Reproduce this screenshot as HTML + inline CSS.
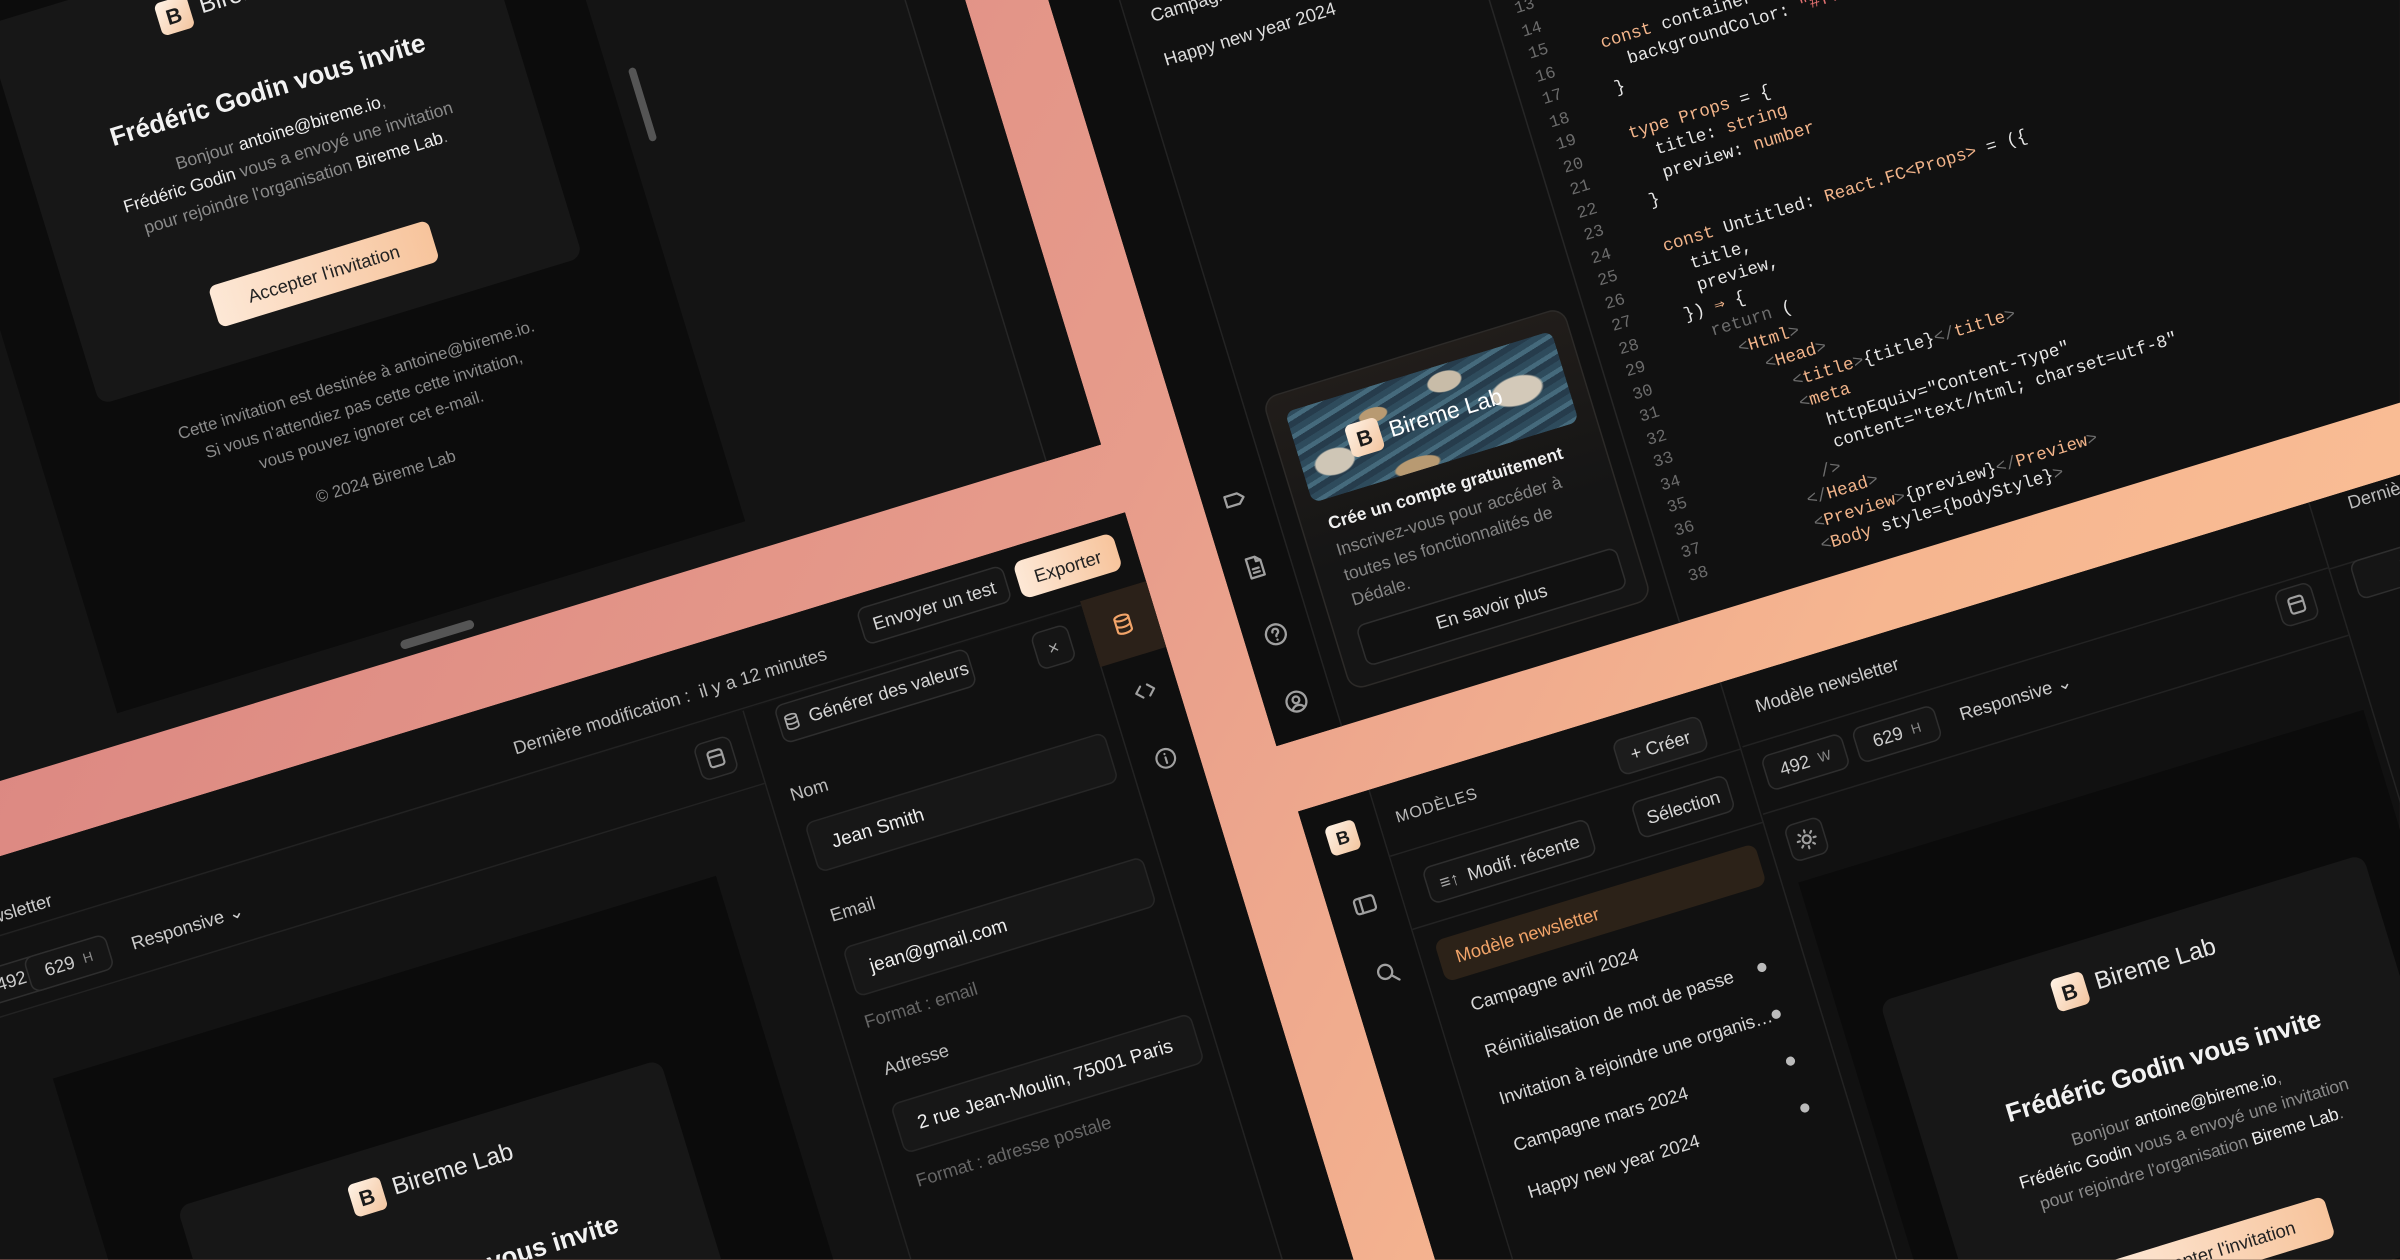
<!DOCTYPE html>
<html><head><meta charset="utf-8">
<style>
*{box-sizing:border-box;margin:0;padding:0}
html,body{width:2400px;height:1260px;overflow:hidden}
#clip{position:relative;width:2400px;height:1260px;overflow:hidden;background:linear-gradient(118deg,#d8817f 0%,#e79c8b 45%,#f6b690 72%,#fcc298 100%);font-family:"Liberation Sans",sans-serif}
#w{position:absolute;left:0;top:0;width:1568px;height:823px;transform:scale(1.5306);transform-origin:0 0;overflow:hidden}
#s{position:absolute;left:0;top:0;width:0;height:0;transform:rotate(-17deg);transform-origin:0 0}
.a{position:absolute;white-space:nowrap}
.p{position:absolute;background:#111}
.t{position:absolute;white-space:nowrap;color:#d8d8d8;font-size:12px;line-height:16px}
.btn{position:absolute;border:1px solid #2e2e2e;background:#151515;border-radius:6px;color:#d6d6d6;font-size:12px;display:flex;align-items:center;justify-content:center;gap:6px;white-space:nowrap}
.grad{background:linear-gradient(90deg,#fde8d6,#f7c49c);color:#222;border:none}
.logo{display:inline-flex;align-items:center;justify-content:center;width:22px;height:22px;border-radius:4px;background:linear-gradient(135deg,#fff3e6,#f3c49e);color:#1a1a1a;font-weight:700;font-size:14px}
.email{position:absolute;width:330px}
.email .card{position:absolute;left:0;top:0;width:330px;height:259px;background:#171717;border-radius:8px}
.email .c{position:absolute;left:0;width:330px;text-align:center;white-space:nowrap}
.email .body{color:#8a8a8a;font-size:11.5px;line-height:17px}
.email .body b{color:#eee;font-weight:400}
.inp{position:absolute;background:#171717;border:1px solid #262626;border-radius:6px;color:#eee;font-size:12.5px;display:flex;align-items:center;padding-left:13px;white-space:nowrap}
.lab{position:absolute;color:#bdbdbd;font-size:12px;line-height:14px;white-space:nowrap}
.hint{position:absolute;color:#666;font-size:12px;line-height:14px;white-space:nowrap}
.code{position:absolute;font-family:"Liberation Mono",monospace;font-size:11.5px;line-height:15.5px;white-space:pre;color:#e6e6e6}
.num{position:absolute;font-family:"Liberation Mono",monospace;font-size:11px;line-height:15.5px;color:#6c6c6c;text-align:right;width:28px;white-space:pre}
.k{color:#f2b48a}.g{color:#6d6d6d}.r{color:#e07070}
svg.i{position:absolute;fill:none;stroke:#a0a0a0;stroke-width:1.5;stroke-linecap:round;stroke-linejoin:round}
</style></head><body>
<div id="clip">
<div id="w"><div id="s">

<!-- TOP LEFT PANEL -->
<div class="p" style="left:-500px;top:-400px;width:1103px;height:888px;background:#141414"></div>
<div class="p" style="left:-63px;top:-400px;width:429px;height:868px;background:#0c0c0c"></div>
<div class="p" style="left:565px;top:-400px;width:38px;height:888px;background:#111;border-left:1px solid #262626"></div>
<div class="a" style="left:379px;top:163px;width:5px;height:50px;border-radius:3px;background:#555"></div>
<div class="a" style="left:127px;top:477px;width:50px;height:6px;border-radius:3px;background:#555"></div>
<div class="email" style="left:-15px;top:13px">
 <div class="card"></div>
 <div class="c" style="top:18px;height:24px;display:flex;justify-content:center;align-items:center;gap:7px"><span class="logo">B</span><span style="color:#e6e6e6;font-size:16px">Bireme Lab</span></div>
 <div class="c" style="top:83px;line-height:24px;font-size:17px;font-weight:700;color:#f2f2f2">Frédéric Godin vous invite</div>
 <div class="c body" style="top:116px">Bonjour <b>antoine@bireme.io</b>,<br><b>Frédéric Godin</b> vous a envoyé une invitation<br>pour rejoindre l'organisation <b>Bireme Lab</b>.</div>
 <div class="btn grad" style="left:90px;top:206px;width:150px;height:28px;border-radius:5px">Accepter l'invitation</div>
 <div class="c body" style="top:285px;font-size:11px;color:#8c8c8c">Cette invitation est destinée à antoine@bireme.io.<br>Si vous n'attendiez pas cette cette invitation,<br>vous pouvez ignorer cet e-mail.</div>
 <div class="c body" style="top:351px;font-size:11px;color:#8c8c8c">© 2024 Bireme Lab</div>
</div>

<!-- TOP RIGHT PANEL -->
<div class="p" style="left:655px;top:-400px;width:1200px;height:1110px"></div>
<div class="p" style="left:655px;top:-400px;width:45px;height:1110px;background:#0e0e0e;border-right:1px solid #232323"></div>
<div class="p" style="left:930px;top:-400px;width:1px;height:1110px;background:#262626"></div>
<div class="t" style="left:716px;top:222px;color:#ddd">Campagne mars 2024</div>
<div class="t" style="left:716px;top:252px;color:#ddd">Happy new year 2024</div>
<svg class="i" style="left:668px;top:540px" width="16" height="16" viewBox="0 0 16 16"><path d="M2 4.5h8.5l3.5 3.5-3.5 3.5H2z"/></svg>
<svg class="i" style="left:668px;top:586px" width="16" height="16" viewBox="0 0 16 16"><path d="M3.5 1.5h6l3 3v10h-9z M9.5 1.5v3h3 M6 9h4 M6 11.5h4"/></svg>
<svg class="i" style="left:668px;top:632px" width="16" height="16" viewBox="0 0 16 16"><circle cx="8" cy="8" r="6.5"/><path d="M6.2 6.2a1.9 1.9 0 1 1 2.6 1.8c-.6.3-.8.7-.8 1.3 M8 11.6v.1"/></svg>
<svg class="i" style="left:668px;top:678px" width="16" height="16" viewBox="0 0 16 16"><circle cx="8" cy="8" r="6.5"/><circle cx="8" cy="6.8" r="2.2"/><path d="M4.3 12.3c1-1.3 2.2-1.9 3.7-1.9s2.7.6 3.7 1.9"/></svg>
<div class="a" style="left:712px;top:490px;width:206px;height:200px;border-radius:10px;border:1px solid #2c2a28;background:linear-gradient(180deg,#211d1a,#151515 60%)"></div>
<div class="a" style="left:724px;top:503px;width:182px;height:62px;border-radius:6px;overflow:hidden;background:
radial-gradient(ellipse 14px 9px at 12% 65%,#cfc6b6 90%,transparent),
radial-gradient(ellipse 18px 10px at 82% 50%,#d3c9b9 90%,transparent),
radial-gradient(ellipse 12px 7px at 58% 18%,#c8bca8 90%,transparent),
radial-gradient(ellipse 16px 6px at 40% 95%,#b89a72 90%,transparent),
radial-gradient(ellipse 10px 5px at 30% 30%,#b89a72 90%,transparent),
repeating-linear-gradient(165deg,#2e4b5c 0 4px,#456a7c 4px 7px,#263c4c 7px 11px);">
 <div style="position:absolute;left:34px;top:20px;display:flex;align-items:center;gap:6px"><span class="logo">B</span><span style="color:#fff;font-size:15px">Bireme Lab</span></div>
</div>
<div class="t" style="left:730px;top:574px;color:#f0f0f0;font-weight:700;font-size:11.5px">Crée un compte gratuitement</div>
<div class="t" style="left:730px;top:592px;color:#858585;font-size:11.5px;line-height:17px">Inscrivez-vous pour accéder à<br>toutes les fonctionnalités de<br>Dédale.</div>
<div class="btn" style="left:727px;top:650px;width:178px;height:28px;background:#111">En savoir plus</div>
<div class="num" style="left:930px;top:289px">13
14
15
16
17
18
19
20
21
22
23
24
25
26
27
28
29
30
31
32
33
34
35
36
37
38</div>
<div class="code" style="left:992px;top:310px">
<span class="k">const</span> container = {
  backgroundColor: <span class="r">"#fff"</span>,
}

<span class="k">type</span> <span class="k">Props</span> = {
  title: <span class="k">string</span>
  preview: <span class="k">number</span>
}

<span class="k">const</span> Untitled: <span class="k">React.FC&lt;Props&gt;</span> = ({
  title,
  preview,
}) <span class="k">⇒</span> {
  <span class="g">return</span> (
    <span class="g">&lt;</span><span class="k">Html</span><span class="g">&gt;</span>
      <span class="g">&lt;</span><span class="k">Head</span><span class="g">&gt;</span>
        <span class="g">&lt;</span><span class="k">title</span><span class="g">&gt;</span>{title}<span class="g">&lt;/</span><span class="k">title</span><span class="g">&gt;</span>
        <span class="g">&lt;</span><span class="k">meta</span>
          httpEquiv="Content-Type"
          content="text/html; charset=utf-8"
        <span class="g">/&gt;</span>
      <span class="g">&lt;/</span><span class="k">Head</span><span class="g">&gt;</span>
      <span class="g">&lt;</span><span class="k">Preview</span><span class="g">&gt;</span>{preview}<span class="g">&lt;/</span><span class="k">Preview</span><span class="g">&gt;</span>
      <span class="g">&lt;</span><span class="k">Body</span> style={bodyStyle}<span class="g">&gt;</span></div>

<!-- BOTTOM LEFT PANEL -->
<div class="p" style="left:-500px;top:535px;width:1105px;height:900px;background:#131313"></div>
<div class="p" style="left:-500px;top:535px;width:1105px;height:50px;background:#111;border-bottom:1px solid #222"></div>
<div class="t" style="left:-237px;top:564px;color:#ccc">Modèle newsletter</div>
<div class="t" style="left:178px;top:558px;color:#bdbdbd">Dernière modification :&nbsp; il y a 12 minutes</div>
<div class="btn" style="left:418px;top:544px;width:100px;height:25px">Envoyer un test</div>
<div class="btn grad" style="left:525px;top:545px;width:68px;height:25px">Exporter</div>
<div class="p" style="left:-500px;top:586px;width:828px;height:50px;background:#121212;border-bottom:1px solid #222"></div>
<div class="btn" style="left:-200px;top:603px;width:54px;height:24px;color:#ccc">492 <span style="font-size:9px;color:#888">W</span></div>
<div class="btn" style="left:-169px;top:603px;width:56px;height:24px;color:#ccc">629 <span style="font-size:9px;color:#888">H</span></div>
<div class="t" style="left:-98px;top:607px;color:#ccc">Responsive ⌄</div>
<div class="btn" style="left:290px;top:598px;width:25px;height:25px"></div>
<svg class="i" style="left:295px;top:603px" width="15" height="15" viewBox="0 0 16 16"><rect x="3" y="2.5" width="10" height="11" rx="2"/><path d="M3 6.5h10"/></svg>
<div class="p" style="left:-173px;top:684px;width:453px;height:700px;background:#0b0b0b"></div>
<div class="email" style="left:-120px;top:788px">
 <div class="card"></div>
 <div class="c" style="top:18px;height:24px;display:flex;justify-content:center;align-items:center;gap:7px"><span class="logo">B</span><span style="color:#e6e6e6;font-size:16px">Bireme Lab</span></div>
 <div class="c" style="top:83px;line-height:24px;font-size:17px;font-weight:700;color:#f2f2f2">Frédéric Godin vous invite</div>
</div>
<div class="p" style="left:328px;top:586px;width:232px;height:850px;background:#111;border-left:1px solid #232323"></div>
<div class="btn" style="left:348px;top:589px;width:132px;height:26px"><svg width="12" height="12" viewBox="0 0 16 16" style="fill:none;stroke:#aaa;stroke-width:1.5"><ellipse cx="8" cy="3.5" rx="5" ry="2"/><path d="M3 3.5v9c0 1.1 2.2 2 5 2s5-.9 5-2v-9 M3 8c0 1.1 2.2 2 5 2s5-.9 5-2"/></svg>Générer des valeurs</div>
<div class="btn" style="left:522px;top:593px;width:25px;height:25px;color:#aaa">×</div>
<div class="lab" style="left:342px;top:641px">Nom</div>
<div class="inp" style="left:345px;top:668px;width:205px;height:34px">Jean Smith</div>
<div class="lab" style="left:344px;top:724px">Email</div>
<div class="inp" style="left:345px;top:753px;width:205px;height:34px">jean@gmail.com</div>
<div class="hint" style="left:345px;top:797px">Format : email</div>
<div class="lab" style="left:348px;top:830px">Adresse</div>
<div class="inp" style="left:345px;top:860px;width:205px;height:34px">2 rue Jean-Moulin, 75001 Paris</div>
<div class="hint" style="left:347px;top:906px">Format : adresse postale</div>
<div class="p" style="left:560px;top:582px;width:45px;height:850px;background:#0f0f0f;border-left:1px solid #232323"></div>
<div class="p" style="left:560px;top:582px;width:45px;height:45px;background:#2b2119"></div>
<svg class="i" style="left:575px;top:597px;stroke:#f2a469" width="15" height="15" viewBox="0 0 16 16"><ellipse cx="8" cy="3.5" rx="5" ry="2"/><path d="M3 3.5v9c0 1.1 2.2 2 5 2s5-.9 5-2v-9 M3 8c0 1.1 2.2 2 5 2s5-.9 5-2"/></svg>
<svg class="i" style="left:576px;top:643px" width="15" height="15" viewBox="0 0 16 16"><path d="M5.5 4 1.5 8l4 4 M10.5 4l4 4-4 4"/></svg>
<svg class="i" style="left:576px;top:689px" width="15" height="15" viewBox="0 0 16 16"><circle cx="8" cy="8" r="6.5"/><path d="M8 7.3v4 M8 4.8v.1"/></svg>

<!-- BOTTOM RIGHT PANEL -->
<div class="p" style="left:656px;top:755px;width:1200px;height:700px"></div>
<div class="p" style="left:656px;top:755px;width:49px;height:700px;background:#0f0f0f;border-right:1px solid #232323"></div>
<span class="logo a" style="left:669px;top:770px;width:20px;height:20px;font-size:12px">B</span>
<svg class="i" style="left:672px;top:818px" width="16" height="16" viewBox="0 0 16 16"><rect x="1.5" y="3" width="13" height="10" rx="2"/><path d="M5.5 3v10"/></svg>
<svg class="i" style="left:673px;top:865px" width="16" height="16" viewBox="0 0 16 16"><circle cx="6.8" cy="6.8" r="4.6"/><path d="M10.3 10.3l4 4"/></svg>
<div class="p" style="left:705px;top:755px;width:240px;height:700px;background:#111;border-right:1px solid #232323"></div>
<div class="p" style="left:705px;top:800px;width:240px;height:1px;background:#232323"></div>
<div class="p" style="left:705px;top:850px;width:240px;height:1px;background:#232323"></div>
<div class="t" style="left:716px;top:770px;font-size:10.5px;letter-spacing:.6px;color:#bbb">MODÈLES</div>
<div class="btn" style="left:865px;top:771px;width:60px;height:24px;background:#1c1c1c">+ Créer</div>
<div class="btn" style="left:722px;top:814px;width:113px;height:25px"><span style="color:#aaa">≡↑</span>Modif. récente</div>
<div class="btn" style="left:865px;top:813px;width:65px;height:25px">Sélection</div>
<div class="a" style="left:716px;top:862px;width:219px;height:28px;border-radius:6px;background:#2c2218"></div>
<div class="t" style="left:727px;top:868px;color:#f2a469">Modèle newsletter</div>
<div class="t" style="left:727px;top:901px">Campagne avril 2024</div>
<div class="t" style="left:727px;top:933px">Réinitialisation de mot de passe</div>
<div class="t" style="left:727px;top:965px">Invitation à rejoindre une organis…</div>
<div class="t" style="left:727px;top:997px">Campagne mars 2024</div>
<div class="t" style="left:727px;top:1029px">Happy new year 2024</div>
<div class="a" style="left:913px;top:938px;width:6px;height:6px;border-radius:3px;background:#bbb"></div>
<div class="a" style="left:913px;top:970px;width:6px;height:6px;border-radius:3px;background:#bbb"></div>
<div class="a" style="left:913px;top:1002px;width:6px;height:6px;border-radius:3px;background:#bbb"></div>
<div class="a" style="left:913px;top:1034px;width:6px;height:6px;border-radius:3px;background:#bbb"></div>
<div class="p" style="left:946px;top:755px;width:400px;height:45px;background:#111;border-bottom:1px solid #222"></div>
<div class="t" style="left:962px;top:769px;color:#ccc">Modèle newsletter</div>
<div class="btn" style="left:955px;top:809px;width:55px;height:24px;color:#ccc">492 <span style="font-size:9px;color:#888">W</span></div>
<div class="btn" style="left:1017px;top:809px;width:56px;height:24px;color:#ccc">629 <span style="font-size:9px;color:#888">H</span></div>
<div class="t" style="left:1088px;top:813px;color:#ccc">Responsive ⌄</div>
<div class="btn" style="left:1307px;top:804px;width:25px;height:25px"></div>
<svg class="i" style="left:1312px;top:809px" width="15" height="15" viewBox="0 0 16 16"><rect x="3" y="2.5" width="10" height="11" rx="2"/><path d="M3 6.5h10"/></svg>
<div class="p" style="left:946px;top:845px;width:400px;height:1px;background:#222"></div>
<div class="btn" style="left:956px;top:857px;width:25px;height:25px"></div>
<svg class="i" style="left:961px;top:862px" width="15" height="15" viewBox="0 0 16 16"><circle cx="8" cy="8" r="2.8"/><path d="M8 1.5v1.5M8 13v1.5M1.5 8H3M13 8h1.5M3.4 3.4l1 1M11.6 11.6l1 1M3.4 12.6l1-1M11.6 4.4l1-1"/></svg>
<div class="p" style="left:955px;top:895px;width:386px;height:600px;background:#0b0b0b"></div>
<div class="email" style="left:983px;top:985px">
 <div class="card"></div>
 <div class="c" style="top:18px;height:24px;display:flex;justify-content:center;align-items:center;gap:7px"><span class="logo">B</span><span style="color:#e6e6e6;font-size:16px">Bireme Lab</span></div>
 <div class="c" style="top:83px;line-height:24px;font-size:17px;font-weight:700;color:#f2f2f2">Frédéric Godin vous invite</div>
 <div class="c body" style="top:116px">Bonjour <b>antoine@bireme.io</b>,<br><b>Frédéric Godin</b> vous a envoyé une invitation<br>pour rejoindre l'organisation <b>Bireme Lab</b>.</div>
 <div class="btn grad" style="left:90px;top:206px;width:150px;height:28px;border-radius:5px">Accepter l'invitation</div>
</div>
<div class="p" style="left:1346px;top:755px;width:500px;height:700px;background:#111;border-left:1px solid #232323"></div>
<div class="p" style="left:1346px;top:800px;width:500px;height:1px;background:#222"></div>
<div class="t" style="left:1371px;top:755px;color:#bdbdbd">Dernière modification</div>
<div class="btn" style="left:1360px;top:800px;width:120px;height:26px">Formulaire</div>

</div></div>
</div>
</body></html>
